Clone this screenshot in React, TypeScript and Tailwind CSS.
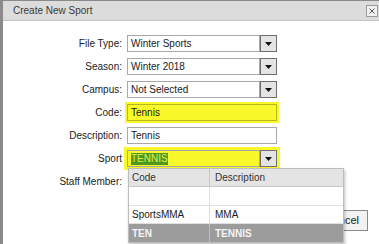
import React from "react";

function Arrow() {
  return (
    <div className="w-[17px] h-[17px] border border-[#6f6f6f] bg-[#e4e4e4] flex items-center justify-center shrink-0">
      <svg width="7" height="4" viewBox="0 0 7 4">
        <path d="M0 0 L7 0 L3.5 4 Z" fill="#111" />
      </svg>
    </div>
  );
}

function Select({ value, hi }: { value: string; hi?: boolean }) {
  return (
    <div className={`flex w-[150px] h-[17px] ${hi ? "bg-[#f8f82a] shadow-[0_0_0_3px_#f8f82a]" : ""}`}>
      <div className={`flex-1 h-[17px] border border-[#a8a8a8] ${hi ? "bg-[#f8f82a]" : "bg-white"} px-[3px] flex items-center`}>
        {hi ? <span className="bg-[#4e9a1c] text-[#d8ef5a] leading-[12px]">{value}</span> : value}
      </div>
      <Arrow />
    </div>
  );
}

function Input({ value, hi }: { value: string; hi?: boolean }) {
  return (
    <div
      className={`w-[150px] h-[17px] border px-[3px] flex items-center ${
        hi ? "bg-[#f8f82a] border-[#b8b820] shadow-[0_0_0_2px_#f8f82a]" : "bg-white border-[#a8a8a8]"
      }`}
    >
      {value}
    </div>
  );
}

export default function App() {
  const rows: [string, React.ReactNode][] = [
    ["File Type:", <Select value="Winter Sports" />],
    ["Season:", <Select value="Winter 2018" />],
    ["Campus:", <Select value="Not Selected" />],
    ["Code:", <Input value="Tennis" hi />],
    ["Description:", <Input value="Tennis" />],
    ["Sport", <Select value="TENNIS" hi />],
    ["Staff Member:", <div className="h-[17px]" />],
  ];

  return (
    <div
      className="w-[379px] h-[244px] bg-white border-l-[3px] border-t border-[#8a8a8a] relative overflow-hidden text-[10px] text-[#1a1a1a]"
      style={{ fontFamily: '"Liberation Sans", Arial, sans-serif' }}
    >
      <div className="h-[20px] bg-[#dcdcdc] border-b border-[#c4c4c4] flex items-center justify-between pl-[10px] pr-[1px]">
        <span className="text-[#3a3a3a] text-[10px]">Create New Sport</span>
        <div className="w-[12px] h-[12px] border border-[#9a9a9a] bg-[#f0f0f0] flex items-center justify-center">
          <svg width="6" height="6" viewBox="0 0 6 6">
            <path d="M0.5 0.5 L5.5 5.5 M5.5 0.5 L0.5 5.5" stroke="#555" strokeWidth="1" />
          </svg>
        </div>
      </div>

      <div className="pt-[11px] flex flex-col">
        {rows.map(([label, field]) => (
          <div key={label} className="h-[23px] flex items-center">
            <div className="w-[124px] text-right pr-[5px] text-[#222]">{label}</div>
            {field}
          </div>
        ))}
        <div className="flex justify-end pr-[11px] mt-[17px]">
          <div className="h-[21px] px-[8px] border border-[#8a8a8a] bg-[#f2f2f2] flex items-center text-[11px]">
            Cancel
          </div>
        </div>
      </div>

      <div className="absolute left-[125px] top-[167px] w-[216px] bg-white border border-[#bdbdbd] shadow-[1px_2px_3px_rgba(0,0,0,0.25)] text-[10px]">
        <div className="flex h-[18px] bg-[#e4e4e4] border-b border-[#c8c8c8] text-[#333]">
          <div className="w-[81px] border-r border-[#c8c8c8] pl-[3px] flex items-center">Code</div>
          <div className="flex-1 pl-[5px] flex items-center">Description</div>
        </div>
        <div className="flex h-[19px] border-b border-[#e0e0e0]">
          <div className="w-[81px] border-r border-[#e0e0e0]" />
          <div className="flex-1" />
        </div>
        <div className="flex h-[18px] border-b border-[#e0e0e0]">
          <div className="w-[81px] border-r border-[#e0e0e0] pl-[3px] flex items-center">SportsMMA</div>
          <div className="flex-1 pl-[5px] flex items-center">MMA</div>
        </div>
        <div className="flex h-[18px] bg-[#9c9c9c] text-[#f4f4f4] font-bold">
          <div className="w-[81px] border-r border-[#bdbdbd] pl-[3px] flex items-center">TEN</div>
          <div className="flex-1 pl-[5px] flex items-center">TENNIS</div>
        </div>
      </div>
    </div>
  );
}
